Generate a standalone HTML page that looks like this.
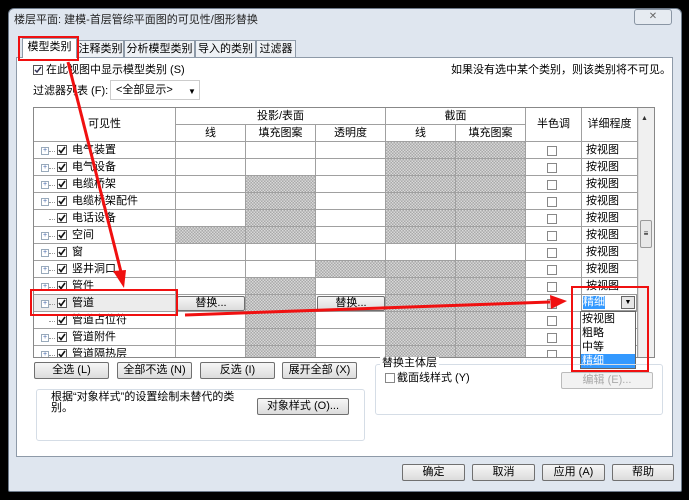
<!DOCTYPE html>
<html><head><meta charset="utf-8"><style>
*{margin:0;padding:0;box-sizing:border-box}
body{width:689px;height:500px;background:#000;position:relative;overflow:hidden;font-family:"Liberation Sans","Noto Sans CJK SC",sans-serif;font-size:11px;line-height:13px;color:#000}
.a{position:absolute}
.win{left:8px;top:8px;width:674px;height:484px;background:#dfe6ef;border:1px solid #6d7a8a;border-radius:6px 6px 2px 2px}
.btn{position:absolute;height:17px;border:1px solid #707070;border-radius:2px;background:linear-gradient(#f6f6f6,#dcdcdc);text-align:center;line-height:15px;font-size:11px}
.tab{position:absolute;top:40px;height:17px;border:1px solid #8e9aa8;border-bottom:none;background:#eef1f5;text-align:center;line-height:16px;font-size:11px}
.cb{position:absolute;width:10px;height:10px;border:1px solid #555;background:#fff}
.cb svg{position:absolute;left:0;top:0}
.g{background:repeating-conic-gradient(#a9a9a9 0 25%,#d8d8d8 0 50%) 0 0/3px 3px}
.cell{position:absolute;border-right:1px solid #a0a0a0;border-bottom:1px solid #a0a0a0}
.hd{position:absolute;border-right:1px solid #a0a0a0;border-bottom:1px solid #a0a0a0;background:#fff;text-align:center;font-size:11px}
.lbl{position:absolute;font-size:11px;line-height:13px;white-space:nowrap}
</style></head><body>
<div class="a win"></div>
<div class="lbl" style="left:14px;top:14px;color:#222">楼层平面: 建模-首层管综平面图的可见性/图形替换</div>
<div class="a" style="left:634px;top:9px;width:38px;height:16px;border:1px solid #8a96a4;border-radius:3px;background:#e6ebf1;text-align:center;font-size:10px;color:#666;line-height:14px">✕</div>
<div class="tab" style="left:22px;width:55px;top:38px;height:20px;background:#fff;z-index:2">模型类别</div>
<div class="tab" style="left:77px;width:47px">注释类别</div>
<div class="tab" style="left:124px;width:71px">分析模型类别</div>
<div class="tab" style="left:195px;width:61px">导入的类别</div>
<div class="tab" style="left:256px;width:40px">过滤器</div>
<div class="a" style="left:16px;top:57px;width:657px;height:400px;background:#fff;border:1px solid #8e9aa8"></div>
<div class="cb" style="left:33px;top:65px"><svg width="8" height="8"><path d="M1 4 L3 6 L7 1" stroke="#335" stroke-width="1.5" fill="none"/></svg></div>
<div class="lbl" style="left:46px;top:64px">在此视图中显示模型类别 (S)</div>
<div class="lbl" style="left:451px;top:64px">如果没有选中某个类别，则该类别将不可见。</div>
<div class="lbl" style="left:33px;top:85px">过滤器列表 (F):</div>
<div class="a" style="left:110px;top:80px;width:90px;height:20px;border:1px solid #ccc;background:#fff"></div>
<div class="lbl" style="left:116px;top:84px">&lt;全部显示&gt;</div>
<div class="lbl" style="left:188px;top:85px;font-size:8px">▼</div>
<div class="a" style="left:33px;top:107px;width:622px;height:251px;border:1px solid #888;background:#fff;overflow:hidden">
<div class="hd" style="left:0;top:0;width:142px;height:34px;line-height:32px">可见性</div>
<div class="hd" style="left:142px;top:0;width:210px;height:17px;line-height:16px">投影/表面</div>
<div class="hd" style="left:142px;top:17px;width:70px;height:17px;line-height:16px">线</div>
<div class="hd" style="left:212px;top:17px;width:70px;height:17px;line-height:16px">填充图案</div>
<div class="hd" style="left:282px;top:17px;width:70px;height:17px;line-height:16px">透明度</div>
<div class="hd" style="left:352px;top:0;width:140px;height:17px;line-height:16px">截面</div>
<div class="hd" style="left:352px;top:17px;width:70px;height:17px;line-height:16px">线</div>
<div class="hd" style="left:422px;top:17px;width:70px;height:17px;line-height:16px">填充图案</div>
<div class="hd" style="left:492px;top:0;width:56px;height:34px;line-height:32px">半色调</div>
<div class="hd" style="left:548px;top:0;width:56px;height:34px;line-height:32px">详细程度</div>
<div class="a" style="left:604px;top:0;width:17px;height:250px;background:#f0f0f0;border-left:1px solid #ddd"></div>
<div class="a" style="left:607px;top:4px;font-size:7px;color:#333">▲</div>
<div class="a" style="left:606px;top:112px;width:12px;height:28px;border:1px solid #999;border-radius:2px;background:#e8e8e8;font-size:8px;text-align:center;line-height:26px">≡</div>
<div id="rows"></div>
</div>
<script>
var names=["电气装置","电气设备","电缆桥架","电缆桥架配件","电话设备","空间","窗","竖井洞口","管件","管道","管道占位符","管道附件","管道隔热层"];
var gl={5:1},gf={2:1,3:1,4:1,5:1,8:1,9:1,10:1,11:1,12:1},gt={7:1};
var chk='<svg width="8" height="8"><path d="M1 4 L3 6.5 L7 1" stroke="#111" stroke-width="1.6" fill="none"/></svg>';
var h="";
for(var i=0;i<names.length;i++){
 var t=34+i*17;var sel=i==9;
 h+='<div class="cell" style="left:0;top:'+t+'px;width:142px;height:17px;'+(sel?'background:#ececec':'')+'"></div>';
 if(i!=4&&i!=10)h+='<div class="a" style="left:7px;top:'+(t+5)+'px;width:8px;height:8px;border:1px solid #9ab;font-size:7px;line-height:6px;text-align:center;color:#46a;background:#fff">+</div>';
 h+='<div class="a" style="left:15px;top:'+(t+9)+'px;width:6px;border-top:1px dotted #999"></div>';
 h+='<div class="cb" style="left:23px;top:'+(t+3)+'px">'+chk+'</div>';
 h+='<div class="lbl" style="left:38px;top:'+(t+2)+'px">'+names[i]+'</div>';
 var cols=[[142,gl[i]],[212,gf[i]],[282,gt[i]],[352,i!=6],[422,i!=6]];
 for(var c=0;c<5;c++){h+='<div class="cell'+(cols[c][1]?' g':'')+'" style="left:'+cols[c][0]+'px;top:'+t+'px;width:70px;height:17px"></div>';}
 if(sel){h+='<div class="btn" style="left:143px;top:'+(t+1)+'px;width:68px;height:15px;line-height:13px">替换...</div><div class="btn" style="left:283px;top:'+(t+1)+'px;width:68px;height:15px;line-height:13px">替换...</div>';}
 h+='<div class="cell" style="left:492px;top:'+t+'px;width:56px;height:17px"></div>';
 h+='<div class="a" style="left:513px;top:'+(t+4)+'px;width:10px;height:10px;border:1px solid #888;background:'+(sel?'#ddd':'#fff')+'"></div>';
 h+='<div class="cell" style="left:548px;top:'+t+'px;width:56px;height:17px"></div>';
 if(!sel)h+='<div class="lbl" style="left:552px;top:'+(t+2)+'px">按视图</div>';
}
document.getElementById("rows").innerHTML=h;
</script>
<div class="a" style="left:581px;top:294px;width:56px;height:17px;background:#fff;border:1px solid #999"></div>
<div class="a" style="left:583px;top:296px;width:22px;height:13px;background:#3399ff;color:#fff;font-size:11px;line-height:13px">精细</div>
<div class="a" style="left:621px;top:296px;width:14px;height:13px;border:1px solid #666;background:#e6e6e6;font-size:7px;text-align:center;line-height:11px">▼</div>
<div class="a" style="left:580px;top:311px;width:56px;height:58px;background:#fff;border:1px solid #666"></div>
<div class="lbl" style="left:582px;top:313px">按视图</div>
<div class="lbl" style="left:582px;top:327px">粗略</div>
<div class="lbl" style="left:582px;top:341px">中等</div>
<div class="a" style="left:581px;top:354px;width:54px;height:14px;background:#3399ff;color:#fff;line-height:14px;padding-left:1px">精细</div>
<div class="btn" style="left:34px;top:362px;width:75px">全选 (L)</div>
<div class="btn" style="left:117px;top:362px;width:75px">全部不选 (N)</div>
<div class="btn" style="left:200px;top:362px;width:75px">反选 (I)</div>
<div class="btn" style="left:282px;top:362px;width:75px">展开全部 (X)</div>
<div class="a" style="left:36px;top:389px;width:329px;height:52px;border:1px solid #d5dde6;border-radius:3px"></div>
<div class="lbl" style="left:51px;top:392px;line-height:11px">根据“对象样式”的设置绘制未替代的类<br>别。</div>
<div class="btn" style="left:257px;top:398px;width:92px">对象样式 (O)...</div>
<div class="a" style="left:375px;top:364px;width:288px;height:51px;border:1px solid #d5dde6;border-radius:3px"></div>
<div class="lbl" style="left:380px;top:357px;background:#fff;padding:0 2px">替换主体层</div>
<div class="a" style="left:385px;top:373px;width:10px;height:10px;border:1px solid #888;background:#fff"></div>
<div class="lbl" style="left:397px;top:372px">截面线样式 (Y)</div>
<div class="btn" style="left:561px;top:372px;width:92px;color:#aaa;border-color:#bbb;background:#f2f2f2">编辑 (E)...</div>
<div class="btn" style="left:402px;top:464px;width:63px">确定</div>
<div class="btn" style="left:472px;top:464px;width:63px">取消</div>
<div class="btn" style="left:542px;top:464px;width:63px">应用 (A)</div>
<div class="btn" style="left:612px;top:464px;width:62px">帮助</div>
<svg class="a" style="left:0;top:0" width="689" height="500">
<g fill="none" stroke="#f01010" stroke-width="2">
<rect x="19" y="37" width="59" height="23"/>
<rect x="31" y="290" width="146" height="25"/>
<rect x="572" y="287" width="76" height="84"/>
</g>
<line x1="68" y1="62" x2="121" y2="272" stroke="#f01010" stroke-width="3"/>
<polygon points="113,271 126,270 124,288" fill="#f01010"/>
<line x1="185" y1="315" x2="550" y2="302" stroke="#f01010" stroke-width="3"/>
<polygon points="550,295 567,301 551,309" fill="#f01010"/>
</svg>
</body></html>
